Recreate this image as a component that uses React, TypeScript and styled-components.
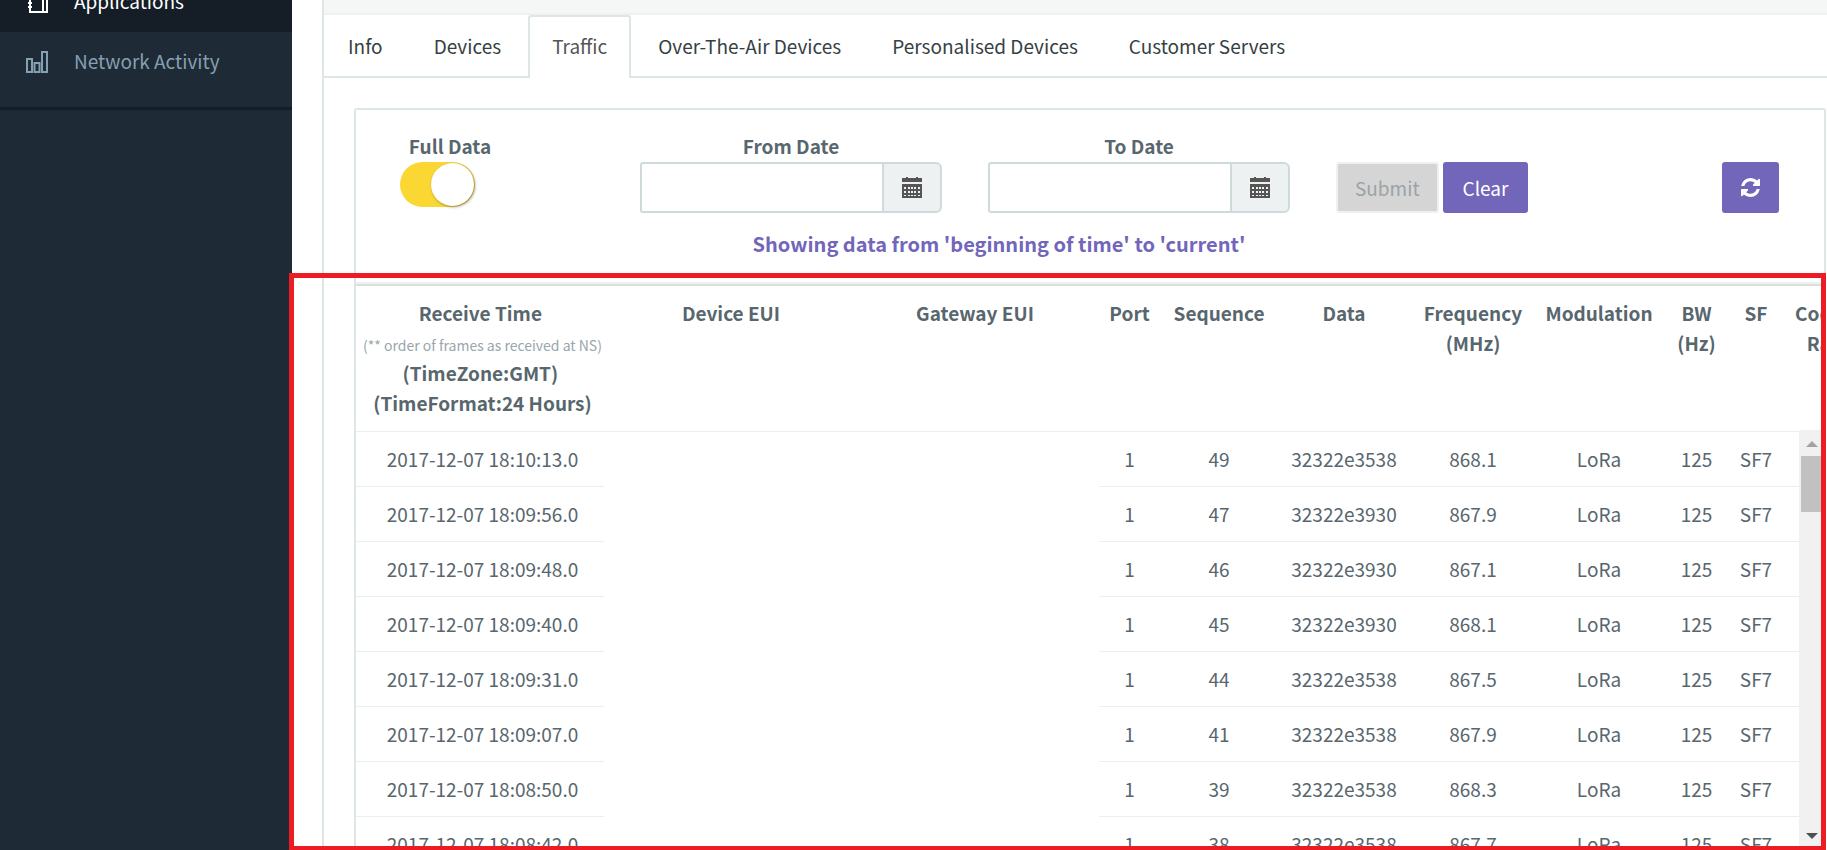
import React from "react";
import styled, { createGlobalStyle } from "styled-components";

const Global = createGlobalStyle`
  *, *::before, *::after { box-sizing: border-box; }
  body {
    margin: 0;
    background: #fff;
    color: #58666e;
    font-family: "Noto Sans CJK SC", "Noto Sans", sans-serif;
    font-size: 19px;
    line-height: 30px;
  }
  button, input { font: inherit; }
`;

const Page = styled.div`
  position: relative;
  display: flex;
  height: 100vh;
  overflow: hidden;
`;

const Sidebar = styled.nav`
  flex: none;
  width: 292px;
  background: #1e2b36;
`;

const NavGroup = styled.div`
  height: 110px;
  border-bottom: 3px solid #151e26;
  display: flex;
  flex-direction: column;
  justify-content: flex-end;
  padding-bottom: 15px;
`;

const NavLink = styled.a<{ $active?: boolean }>`
  flex: none;
  display: flex;
  align-items: center;
  gap: 25px;
  height: 60px;
  padding: 0 0 2px 26px;
  text-decoration: none;
  color: ${(p) => (p.$active ? "#ffffff" : "#869fb1")};
  background: ${(p) => (p.$active ? "#151e26" : "transparent")};
`;

const NavIcon = styled.svg`
  width: 23px;
  height: 23px;
  fill: none;
  stroke: currentColor;
  stroke-width: 2;
`;

const Main = styled.main`
  flex: 1;
  min-width: 0;
  display: flex;
  flex-direction: column;
  margin-left: 30px;
  border-left: 2px solid #dee5e7;
`;

const Strip = styled.div`
  flex: none;
  height: 15px;
  background: #f5f7f7;
  border-bottom: 2px solid #edf1f2;
`;

const Tabs = styled.div`
  flex: none;
  display: flex;
  gap: 3px;
  height: 63px;
  box-shadow: inset 0 -2px #dee5e7;
`;

const Tab = styled.a<{ $active?: boolean }>`
  padding: 14px 22px 0;
  border: 2px solid ${(p) => (p.$active ? "#dee5e7" : "transparent")};
  border-bottom: 0;
  border-radius: 3px 3px 0 0;
  background: ${(p) => (p.$active ? "#fff" : "transparent")};
  color: ${(p) => (p.$active ? "#555" : "#363f44")};
  text-decoration: none;
  white-space: nowrap;
`;

const Panel = styled.section`
  flex: 1;
  min-height: 0;
  display: flex;
  flex-direction: column;
  margin: 30px 1px 0 30px;
  border: 2px solid #dee5e7;
  border-bottom: 0;
  border-radius: 3px 3px 0 0;
`;

const Filters = styled.form`
  flex: none;
  display: flex;
  align-items: flex-end;
  gap: 46px;
  padding: 21px 45px 16px 44px;
`;

const ToggleField = styled.div`
  width: 194px;
  align-self: flex-start;
`;

const Label = styled.label`
  display: block;
  margin-bottom: 1px;
  text-align: center;
  font-weight: 700;
`;

const ToggleLabel = styled(Label)`
  width: 100px;
`;

const Toggle = styled.input`
  appearance: none;
  display: block;
  margin: 0;
  width: 75px;
  height: 45px;
  padding: 1px;
  border-radius: 23px;
  background: #fad733;
  &::before {
    content: "";
    display: block;
    width: 43px;
    height: 43px;
    margin-left: auto;
    border-radius: 50%;
    background: #fff;
    box-shadow: 1px 1px 3px rgba(0, 0, 0, 0.4);
  }
`;

const DateField = styled.div`
  width: 302px;
`;

const InputGroup = styled.div`
  display: flex;
  height: 51px;
`;

const DateInput = styled.input`
  flex: 1;
  min-width: 0;
  border: 2px solid #cfdadd;
  border-right: 0;
  border-radius: 3px 0 0 3px;
  padding: 0 16px;
  color: inherit;
`;

const Addon = styled.button`
  width: 60px;
  display: flex;
  align-items: center;
  justify-content: center;
  padding: 0;
  border: 2px solid #cfdadd;
  border-radius: 0 6px 6px 0;
  background: #edf1f2;
  color: #555;
`;

const Actions = styled.div`
  display: flex;
  gap: 4px;
`;

const Button = styled.button`
  height: 51px;
  padding: 0 20px;
  border: 0;
  border-radius: 3px;
  background: #7266ba;
  color: #fff;
  display: flex;
  align-items: center;
  &:disabled {
    padding: 0 17px;
    border: 2px solid #edf1f2;
    background: #d5d5d5;
    color: #9ba3a8;
  }
`;

const RefreshButton = styled(Button)`
  margin-left: auto;
  padding: 0 19px;
`;

const Status = styled.p`
  flex: none;
  margin: 0;
  padding: 0 182px 23px 0;
  text-align: center;
  font-size: 20px;
  font-weight: 700;
  color: #7266ba;
`;

const TableArea = styled.div`
  flex: 1;
  min-height: 0;
  position: relative;
  overflow: hidden;
  border-top: 2px solid #edf1f2;
`;

const Table = styled.table`
  table-layout: fixed;
  width: 1517px;
  border-top: 2px solid #dcdddd;
  border-spacing: 0;
  text-align: center;
`;

const HeadCell = styled.th`
  padding: 12px 0 13px;
  vertical-align: top;
  font-weight: 700;
`;

const Note = styled.small`
  display: block;
  padding-top: 2px;
  height: 30px;
  font-size: 14px;
  font-weight: 400;
  color: #98a6ad;
`;

const Cell = styled.td`
  height: 55px;
  padding: 12px 0;
  border-top: 1px solid #eaeff0;
`;

const Redaction = styled.div`
  position: absolute;
  top: 149px;
  bottom: 0;
  left: 248px;
  width: 495px;
  background: #fff;
`;

const Scrollbar = styled.div`
  position: absolute;
  top: 146px;
  right: 0;
  bottom: 0;
  width: 25px;
  padding: 11px 5px;
  display: flex;
  flex-direction: column;
  align-items: center;
  background: #f1f1f1;
`;

const Thumb = styled.div`
  width: 21px;
  height: 56px;
  margin: 9px 0 auto;
  background: #c1c1c1;
`;

const Arrow = styled.svg`
  flex: none;
  width: 12px;
  height: 6px;
`;

const Highlight = styled.div`
  position: absolute;
  top: 273px;
  right: 1px;
  bottom: 0;
  left: 289px;
  border: 5px solid #ed1c24;
  border-bottom-width: 4px;
  pointer-events: none;
`;

const CalendarIcon = () => (
  <svg width="20" height="21" viewBox="0 0 20 21" fill="currentColor" aria-hidden="true">
    <path d="M0 1h4V0h2v1h8V0h2v1h4v4H0z" />
    <path
      fillRule="evenodd"
      d="M0 7h20v14H0zM2 10v2h2v-2zm4 0v2h2v-2zm3 0v2h2v-2zm3 0v2h2v-2zm4 0v2h2v-2zM2 14v2h2v-2zm4 0v2h2v-2zm3 0v2h2v-2zm3 0v2h2v-2zm4 0v2h2v-2zM2 18v1h2v-1zm4 0v1h2v-1zm3 0v1h2v-1zm3 0v1h2v-1zm4 0v1h2v-1z"
    />
  </svg>
);

const RefreshIcon = () => (
  <svg width="19" height="19" viewBox="0 0 1536 1536" fill="currentColor" aria-hidden="true">
    <path d="M1511 928q0 5-1 7-64 268-268 434.500T764 1536q-146 0-282.500-55T238 1324l-129 129q-19 19-45 19t-45-19-19-45V960q0-26 19-45t45-19h448q26 0 45 19t19 45-19 45l-137 137q71 66 161 102t187 36q134 0 250-65t186-179q11-17 53-117 8-23 30-23h192q13 0 22.500 9.500t9.500 22.500zm25-800v448q0 26-19 45t-45 19h-448q-26 0-45-19t-19-45 19-45l138-138Q969 256 768 256q-134 0-250 65T332 500q-11 17-53 117-8 23-30 23H50q-13 0-22.500-9.500T18 608v-7q65-268 270-434.500T768 0q146 0 284 55.500T1297 212l130-129q19-19 45-19t45 19 19 45z" />
  </svg>
);

const tabs = ["Info", "Devices", "Traffic", "Over-The-Air Devices", "Personalised Devices", "Customer Servers"];

const widths = [253, 244, 244, 65, 114, 136, 122, 130, 65, 54, 90];

const frames = [
  ["18:10:13.0", "49", "32322e3538", "868.1"],
  ["18:09:56.0", "47", "32322e3930", "867.9"],
  ["18:09:48.0", "46", "32322e3930", "867.1"],
  ["18:09:40.0", "45", "32322e3930", "868.1"],
  ["18:09:31.0", "44", "32322e3538", "867.5"],
  ["18:09:07.0", "41", "32322e3538", "867.9"],
  ["18:08:50.0", "39", "32322e3538", "868.3"],
  ["18:08:42.0", "38", "32322e3538", "867.7"],
];

const DatePicker = ({ id, label }: { id: string; label: string }) => (
  <DateField>
    <Label htmlFor={id}>{label}</Label>
    <InputGroup>
      <DateInput id={id} type="text" />
      <Addon type="button" aria-label={`Choose ${label}`}>
        <CalendarIcon />
      </Addon>
    </InputGroup>
  </DateField>
);

export default function App() {
  return (
    <>
      <Global />
      <Page>
        <Sidebar>
          <NavGroup>
            <NavLink href="#applications" $active>
              <NavIcon viewBox="0 0 23 23">
                <path d="M4 1h17v21H4zM17 1v21M2 5h4M2 9h4M2 13h4M2 17h4" />
              </NavIcon>
              Applications
            </NavLink>
            <NavLink href="#activity">
              <NavIcon viewBox="0 0 23 23">
                <path d="M1 9h5v13H1zM8.500 13h5v9h-5zM16 2h5v20h-5z" />
              </NavIcon>
              Network Activity
            </NavLink>
          </NavGroup>
        </Sidebar>
        <Main>
          <Strip />
          <Tabs>
            {tabs.map((t) => (
              <Tab key={t} href={`#${t}`} $active={t === "Traffic"}>
                {t}
              </Tab>
            ))}
          </Tabs>
          <Panel>
            <Filters>
              <ToggleField>
                <ToggleLabel htmlFor="full">Full Data</ToggleLabel>
                <Toggle id="full" type="checkbox" role="switch" defaultChecked />
              </ToggleField>
              <DatePicker id="from" label="From Date" />
              <DatePicker id="to" label="To Date" />
              <Actions>
                <Button type="submit" disabled>
                  Submit
                </Button>
                <Button type="reset">Clear</Button>
              </Actions>
              <RefreshButton type="button" aria-label="Refresh">
                <RefreshIcon />
              </RefreshButton>
            </Filters>
            <Status>Showing data from 'beginning of time' to 'current'</Status>
            <TableArea>
              <Table>
                <colgroup>
                  {widths.map((w, i) => (
                    <col key={i} width={w} />
                  ))}
                </colgroup>
                <thead>
                  <tr>
                    <HeadCell>
                      Receive Time&nbsp;
                      <Note>(** order of frames as received at NS)</Note>
                      (TimeZone:GMT)&nbsp;
                      <br />
                      (TimeFormat:24 Hours)
                    </HeadCell>
                    <HeadCell>Device EUI</HeadCell>
                    <HeadCell>Gateway EUI</HeadCell>
                    <HeadCell>Port</HeadCell>
                    <HeadCell>Sequence</HeadCell>
                    <HeadCell>Data</HeadCell>
                    <HeadCell>
                      Frequency
                      <br />
                      (MHz)
                    </HeadCell>
                    <HeadCell>Modulation</HeadCell>
                    <HeadCell>
                      BW
                      <br />
                      (Hz)
                    </HeadCell>
                    <HeadCell>SF</HeadCell>
                    <HeadCell>
                      Coding
                      <br />
                      Rate
                    </HeadCell>
                  </tr>
                </thead>
                <tbody>
                  {frames.map(([time, seq, data, freq]) => (
                    <tr key={time}>
                      <Cell>2017-12-07 {time}</Cell>
                      <Cell />
                      <Cell />
                      <Cell>1</Cell>
                      <Cell>{seq}</Cell>
                      <Cell>{data}</Cell>
                      <Cell>{freq}</Cell>
                      <Cell>LoRa</Cell>
                      <Cell>125</Cell>
                      <Cell>SF7</Cell>
                      <Cell />
                    </tr>
                  ))}
                </tbody>
              </Table>
              <Redaction />
              <Scrollbar>
                <Arrow viewBox="0 0 12 6">
                  <path d="M6 0l6 6H0z" fill="#a3a3a3" />
                </Arrow>
                <Thumb />
                <Arrow viewBox="0 0 12 6">
                  <path d="M0 0h12L6 6z" fill="#505050" />
                </Arrow>
              </Scrollbar>
            </TableArea>
          </Panel>
        </Main>
        <Highlight />
      </Page>
    </>
  );
}
